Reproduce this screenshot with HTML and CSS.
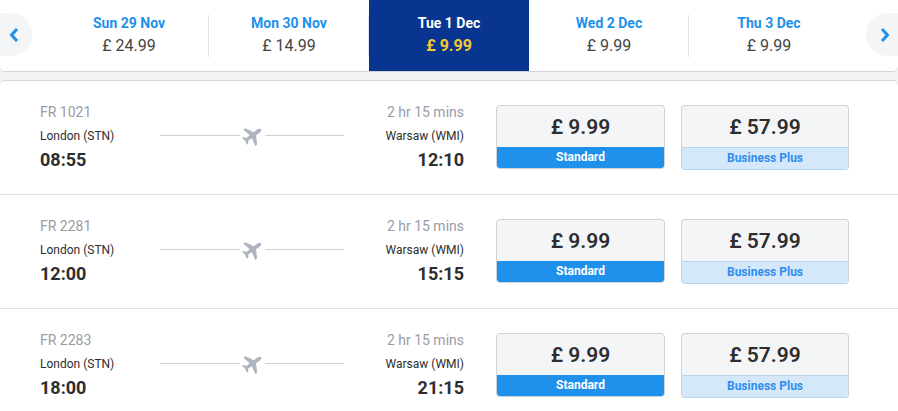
FILE: index.html
```
<!DOCTYPE html>
<html lang="en">
<head>
    <meta charset="UTF-8">
    <meta name="viewport" content="width=device-width, initial-scale=1.0">
    <title>Select flight</title>
    <link rel="stylesheet" href="styles.css">
</head>
<body>
    <svg class="sprite" aria-hidden="true">
        <symbol id="plane" viewBox="0 0 24 24">
            <path transform="rotate(54 12 12)" d="M23.500 16.500v-2.700L14.200 8.600V3C14.200 1.200 13.200 0 12 0S9.800 1.200 9.800 3V8.600L.5 13.800v2.700l9.300-2.100.4 4.900-3 2.200v2l4.800-1.200 4.800 1.200v-2l-3-2.200.4-4.900z"/>
        </symbol>
    </svg>

    <nav class="dates">
        <button class="arrow arrow-prev" aria-label="Previous dates">
            <svg viewBox="0 0 10 14"><path d="M8 1 2.500 7 8 13"/></svg>
        </button>
        <button class="date">
            <span class="date-day">Sun 29 Nov</span>
            <span class="date-price">£ 24.99</span>
        </button>
        <button class="date">
            <span class="date-day">Mon 30 Nov</span>
            <span class="date-price">£ 14.99</span>
        </button>
        <button class="date active">
            <span class="date-day">Tue 1 Dec</span>
            <span class="date-price">£ 9.99</span>
        </button>
        <button class="date">
            <span class="date-day">Wed 2 Dec</span>
            <span class="date-price">£ 9.99</span>
        </button>
        <button class="date">
            <span class="date-day">Thu 3 Dec</span>
            <span class="date-price">£ 9.99</span>
        </button>
        <button class="arrow arrow-next" aria-label="Next dates">
            <svg viewBox="0 0 10 14"><path d="M2 1 7.500 7 2 13"/></svg>
        </button>
    </nav>

    <main class="flights">
        <div class="flight">
            <div class="stop">
                <span class="muted">FR 1021</span>
                <span class="airport">London (STN)</span>
                <span class="time">08:55</span>
            </div>
            <div class="route"><svg><use href="#plane"/></svg></div>
            <div class="stop stop-end">
                <span class="muted">2 hr 15 mins</span>
                <span class="airport">Warsaw (WMI)</span>
                <span class="time">12:10</span>
            </div>
            <div class="fares">
                <button class="fare standard">
                    <span class="fare-price">£ 9.99</span>
                    <span class="fare-name">Standard</span>
                </button>
                <button class="fare business">
                    <span class="fare-price">£ 57.99</span>
                    <span class="fare-name">Business Plus</span>
                </button>
            </div>
        </div>

        <div class="flight">
            <div class="stop">
                <span class="muted">FR 2281</span>
                <span class="airport">London (STN)</span>
                <span class="time">12:00</span>
            </div>
            <div class="route"><svg><use href="#plane"/></svg></div>
            <div class="stop stop-end">
                <span class="muted">2 hr 15 mins</span>
                <span class="airport">Warsaw (WMI)</span>
                <span class="time">15:15</span>
            </div>
            <div class="fares">
                <button class="fare standard">
                    <span class="fare-price">£ 9.99</span>
                    <span class="fare-name">Standard</span>
                </button>
                <button class="fare business">
                    <span class="fare-price">£ 57.99</span>
                    <span class="fare-name">Business Plus</span>
                </button>
            </div>
        </div>

        <div class="flight">
            <div class="stop">
                <span class="muted">FR 2283</span>
                <span class="airport">London (STN)</span>
                <span class="time">18:00</span>
            </div>
            <div class="route"><svg><use href="#plane"/></svg></div>
            <div class="stop stop-end">
                <span class="muted">2 hr 15 mins</span>
                <span class="airport">Warsaw (WMI)</span>
                <span class="time">21:15</span>
            </div>
            <div class="fares">
                <button class="fare standard">
                    <span class="fare-price">£ 9.99</span>
                    <span class="fare-name">Standard</span>
                </button>
                <button class="fare business">
                    <span class="fare-price">£ 57.99</span>
                    <span class="fare-name">Business Plus</span>
                </button>
            </div>
        </div>
    </main>
</body>
</html>
```

FILE: styles.css
```
* {
    box-sizing: border-box;
}
body {
    font-family: Roboto, Arial, sans-serif;
    margin: 0;
    background-color: #f3f3f3;
    color: #2e2e2e;
}
button {
    font-family: inherit;
    color: inherit;
    margin: 0;
    padding: 0;
    border: none;
    background: none;
    cursor: pointer;
}
.sprite {
    display: none;
}

/* Date tabs */
.dates {
    display: flex;
    align-items: stretch;
    background-color: #fff;
    border-bottom: 1px solid #d0d3d6;
    border-radius: 0 0 5px 5px;
}
.arrow {
    flex: none;
    display: flex;
    align-items: center;
    width: 32px;
    height: 43px;
    margin-top: 13px;
    background-color: #f4f5f7;
}
.arrow svg {
    width: 10px;
    height: 14px;
    fill: none;
    stroke: #2091eb;
    stroke-width: 3;
}
.arrow-prev {
    justify-content: flex-start;
    padding-left: 9px;
    margin-right: 17px;
    border-radius: 0 22px 22px 0;
}
.arrow-next {
    justify-content: flex-end;
    padding-right: 8px;
    margin-left: 17px;
    border-radius: 22px 0 0 22px;
}
.date {
    flex: 1;
    display: flex;
    flex-direction: column;
    align-items: center;
    justify-content: flex-start;
    padding: 13px 0 12px;
    background: linear-gradient(#dfe2e6, #dfe2e6) right center / 1px 42px no-repeat;
}
.date:nth-last-child(2) {
    background: none;
}
.date-day {
    font-size: 14px;
    line-height: 20px;
    font-weight: 700;
    color: #2091eb;
}
.date-price {
    font-size: 16px;
    line-height: 26px;
    color: #444;
}
.date.active {
    background: #073590;
}
.active .date-day {
    color: #fff;
}
.active .date-price {
    font-weight: 700;
    color: #f1c933;
}

/* Flight list */
.flights {
    margin-top: 8px;
    background-color: #fff;
    border-top: 1px solid #d3d9e2;
    border-radius: 5px 5px 0 0;
}
.flight {
    display: flex;
    align-items: flex-start;
    padding: 24px 49px 23px 40px;
    border-bottom: 1px solid #e1e1e1;
}
.stop {
    flex: none;
    width: 120px;
    display: flex;
    flex-direction: column;
}
.stop-end {
    text-align: right;
}
.muted {
    font-size: 14px;
    line-height: 14px;
    color: #9a9ca6;
}
.airport {
    font-size: 12px;
    line-height: 16px;
    margin-top: 9px;
}
.time {
    font-size: 18px;
    line-height: 22px;
    font-weight: 700;
    margin-top: 5px;
}
.route {
    flex: 1;
    display: flex;
    align-items: center;
    gap: 2px;
    height: 61px;
}
.route::before,
.route::after {
    content: "";
    flex: 1;
    height: 1px;
    background-color: #cfd0d2;
}
.route svg {
    width: 21px;
    height: 21px;
    fill: #aeb4bf;
}
.fares {
    flex: none;
    display: flex;
    align-items: flex-start;
    gap: 16px;
    margin-left: 32px;
}
.fare {
    width: 168px;
    display: flex;
    flex-direction: column;
    border: 1px solid #cfd2d5;
    border-radius: 4px;
    background-color: #f4f5f7;
    overflow: hidden;
}
.standard {
    width: 169px;
}
.fare-price {
    font-size: 21px;
    line-height: 40px;
    font-weight: 600;
    padding-top: 1px;
}
.fare-name {
    font-size: 12px;
    line-height: 21px;
    font-weight: 700;
}
.standard .fare-name {
    background-color: #2091eb;
    color: #fff;
}
.business .fare-name {
    background-color: #d4e8fa;
    border-top: 1px solid #b2d5f0;
    color: #2f8ded;
}
.business {
    border-bottom-color: #b2d5f0;
}
```
